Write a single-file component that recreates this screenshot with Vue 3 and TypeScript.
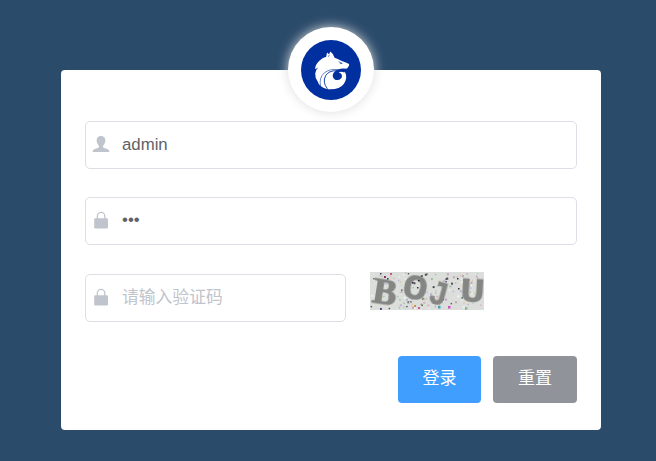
<script setup lang="ts">
import { ref } from 'vue'

interface Speck { x: number; y: number; size: number; color: string }
interface Letter { char: string; x: number; y: number; angle: number; size: number; stretch: number; serif?: boolean }

const username = ref('admin')
const password = ref('123')
const code = ref('')

const letters: Letter[] = [
  { char: 'B', x: 15, y: 32, angle: 9, size: 36, stretch: 1, serif: true },
  { char: 'O', x: 45.5, y: 27.5, angle: 12, size: 37, stretch: 1.12 },
  { char: 'J', x: 69, y: 33, angle: 15, size: 35, stretch: 0.9 },
  { char: 'U', x: 102.5, y: 30, angle: 3, size: 35, stretch: 1.2 },
]

const palette = ['#4d4d57', '#c79fc0', '#a3c09d', '#d9c695', '#d5b2c8', '#a9cfaa', '#bcb4d5', '#efe3ee', '#f0f0e4', '#c4e2cf', '#f3f3f3']

function makeSpecks(count: number): Speck[] {
  let seed = 41
  const next = () => {
    seed = (seed * 16807) % 2147483647
    return seed / 2147483647
  }
  next()
  return Array.from({ length: count }, (_, i) => ({
    x: next() * 112,
    y: next() * 36,
    size: i % 3 === 0 ? 2 : 1.4,
    color: palette[Math.floor(next() * palette.length)],
  }))
}
const specks = makeSpecks(190)

// Clusters that stand out from the even noise, relative to the image.
const accents: Speck[] = [
  { x: 14, y: 4, size: 2, color: '#8b2f68' },
  { x: 20, y: 1, size: 2, color: '#c05a8c' },
  { x: 10, y: 1, size: 1.5, color: '#4b3c68' },
  { x: 17, y: 6, size: 1.5, color: '#333' },
  { x: 42, y: 10, size: 1.5, color: '#25253a' },
  { x: 48, y: 8, size: 1.5, color: '#25253a' },
  { x: 47, y: 15, size: 1.5, color: '#25253a' },
  { x: 44, y: 33, size: 2, color: '#d09040' },
  { x: 48, y: 35, size: 2, color: '#cc5b9d' },
  { x: 51, y: 32, size: 1.5, color: '#8eab4a' },
  { x: 68, y: 34, size: 2.5, color: '#43a0b5' },
  { x: 78, y: 34, size: 2.5, color: '#d44fc0' },
  { x: 87, y: 6, size: 1.5, color: '#333' },
  { x: 88, y: 16, size: 1.5, color: '#333' },
  { x: 10, y: 36, size: 1.8, color: '#30306b' },
]

function reset(): void {
  username.value = ''
  password.value = ''
  code.value = ''
}
</script>

<template>
  <main class="page">
    <section class="card">
      <div class="avatar">
        <svg class="logo" viewBox="0 0 60 60">
          <circle cx="30" cy="30" r="30" fill="#002fa0" />
          <path fill="#fff" d="M25.2 16.7 26 12.5 28 14.3 29.4 11.6Q32.6 14 33.6 17.8Q37 18.7 39.6 20.6L46 22.9Q48.8 24 48.3 25.1Q47.2 27.5 46 28.5Q43.5 29.4 40.4 28.8Q45.7 32.2 45.2 38Q44.1 45.2 37.5 48.1Q31.2 50.2 25 48.8Q18 46.7 16.7 41.6Q14 38.3 14.2 33.4Q14.7 29.6 17.2 27.4L14.1 29.2Q14.2 24.6 18.4 20.8Q21.2 17.9 25.2 16.7Z" />
          <path fill="#002fa0" d="M45.6 28.7Q37.5 27.8 34.2 31.2Q31 33.9 31.9 37Q33 40.2 36.4 40.1Q40.7 39.6 41 36.3Q41 33.2 37.6 32.5Q40 31 43.2 32.5Z" />
          <path class="strand" d="M37 29.6Q28.8 28.5 23.2 33Q17.9 37.7 19.5 46" />
          <path class="strand heavy" d="M35.5 30.7Q27.8 30.5 24.6 35.7Q21.2 42.3 26.4 48.8" />
          <path class="strand" d="m37.5 21.6 3.8 1.7-2.5.3M27.3 16.8l1.2-2.1" />
        </svg>
      </div>

      <form class="form" @submit.prevent>
        <label class="field">
          <svg class="icon" viewBox="0 0 18 18"><path d="M9 1C5.7 1 4.4 3.4 4.7 6.1C4.9 8.4 5.8 9.8 6.9 10.8V12.4L2.8 14.1Q.8 14.8.5 17H17.5Q17.2 14.8 15.2 14.1L11.1 12.4V10.8C12.2 9.8 13.1 8.4 13.3 6.1C13.6 3.4 12.3 1 9 1Z" /></svg>
          <input v-model="username" type="text" />
        </label>
        <label class="field">
          <svg class="icon" viewBox="0 0 18 18"><rect x="2.2" y="7.2" width="13.8" height="10.3" rx="1.2" /><path class="shackle" d="M5.4 8V5A3.7 3.7 0 0 1 12.8 5V8" /></svg>
          <input v-model="password" class="password" type="password" />
        </label>
        <div class="code-row">
          <label class="field">
            <svg class="icon" viewBox="0 0 18 18"><rect x="2.2" y="7.2" width="13.8" height="10.3" rx="1.2" /><path class="shackle" d="M5.4 8V5A3.7 3.7 0 0 1 12.8 5V8" /></svg>
            <input v-model="code" type="text" placeholder="请输入验证码" />
          </label>
          <svg class="captcha" viewBox="0 0 114 38">
            <rect width="114" height="38" fill="#dcdedb" />
            <g class="noise">
              <rect v-for="(s, i) in specks" :key="i" :x="s.x" :y="s.y" :width="s.size" :height="s.size" :fill="s.color" />
            </g>
            <text
              v-for="l in letters"
              :key="l.char"
              :class="{ serif: l.serif }"
              :font-size="l.size"
              :transform="`translate(${l.x} ${l.y - 12}) rotate(${l.angle}) scale(${l.stretch} 1)`"
              y="12"
              text-anchor="middle"
            >{{ l.char }}</text>
            <g class="noise">
              <rect v-for="(s, i) in accents" :key="i" :x="s.x" :y="s.y" :width="s.size" :height="s.size" :fill="s.color" />
            </g>
          </svg>
        </div>
        <div class="actions">
          <button class="button primary" type="submit">登录</button>
          <button class="button info" type="button" @click="reset">重置</button>
        </div>
      </form>
    </section>
  </main>
</template>

<style>
body {
  margin: 0;
}
</style>

<style scoped>
.page {
  box-sizing: border-box;
  height: 461px;
  padding: 70px 55px 0 61px;
  background: #2b4b6b;
  font-family: "Liberation Sans", "Noto Sans CJK SC", sans-serif;
}
.card {
  position: relative;
  box-sizing: border-box;
  width: 540px;
  height: 360px;
  padding: 51px 24px 0;
  border-radius: 4px;
  background: #fff;
}
.avatar {
  position: absolute;
  top: -43px;
  left: 227px;
  display: grid;
  place-items: center;
  width: 86px;
  height: 85px;
  border-radius: 50%;
  background: #fff;
  box-shadow: 0 0 12px #ddd;
}
.logo {
  width: 60px;
  height: 60px;
}
.strand {
  fill: none;
  stroke: #002fa0;
  stroke-width: 0.6;
}
.heavy {
  stroke-width: 0.9;
}
.form {
  display: flex;
  flex-direction: column;
}
.field {
  display: flex;
  align-items: center;
  box-sizing: border-box;
  height: 48px;
  margin-bottom: 28px;
  padding-left: 6px;
  border: 1px solid #dcdfe6;
  border-radius: 5px;
}
.icon {
  flex: none;
  width: 18px;
  height: 18px;
  margin-top: -2px;
  fill: #c0c4cc;
}
.shackle {
  fill: none;
  stroke: #c0c4cc;
  stroke-width: 1.3;
}
input {
  flex: 1;
  min-width: 0;
  height: 46px;
  margin: 0 0 0 12px;
  padding: 0;
  border: 0;
  outline: 0;
  background: transparent;
  color: #606266;
  font: 16.8px "Liberation Sans", "Noto Sans CJK SC", sans-serif;
}
.password {
  height: 44px;
  margin-bottom: 2px;
}
input::placeholder {
  color: #c0c4cc;
  opacity: 1;
}
.code-row {
  display: flex;
  gap: 24px;
  align-items: flex-start;
  margin-top: 1px;
}
.code-row .field {
  width: 261px;
  margin-bottom: 34px;
}
.captcha {
  width: 114px;
  height: 38px;
  margin-top: -2px;
  overflow: visible;
}
.noise {
  filter: blur(0.4px);
}
.captcha text {
  fill: #848684;
  stroke: #848684;
  stroke-width: 0.3;
  font-family: "Liberation Mono", monospace;
  font-weight: 700;
  filter: blur(0.4px);
}
.captcha .serif {
  stroke-width: 1.2;
  font-family: "Liberation Serif", serif;
}
.actions {
  display: flex;
  justify-content: flex-end;
  gap: 12px;
}
.button {
  width: 83px;
  height: 47px;
  padding: 0 0 6px;
  border: 0;
  border-radius: 4px;
  color: #fff;
  font: 17px "Noto Sans CJK SC", sans-serif;
}
.primary {
  background: #409eff;
}
.info {
  width: 84px;
  background: #909399;
}
</style>
